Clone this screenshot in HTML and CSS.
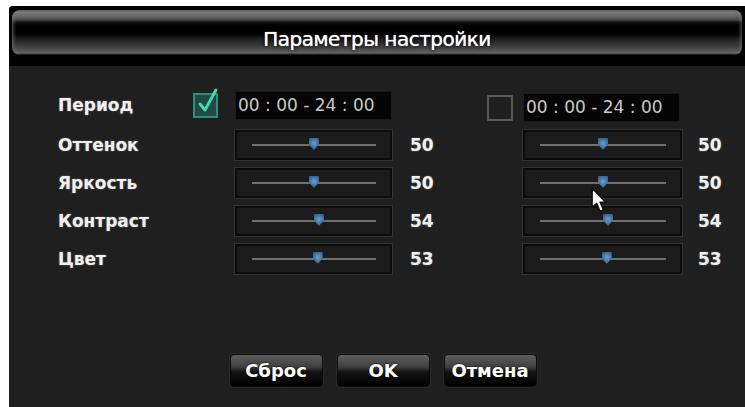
FILE: index.html
```html
<!DOCTYPE html>
<html lang="ru">
<head>
<meta charset="utf-8">
<title>Параметры настройки</title>
<link rel="stylesheet" href="styles.css">
</head>
<body>
<div class="panel">
  <div class="titlebar">
    <div class="gloss"><span class="title">Параметры настройки</span></div>
  </div>
  <div class="content">
    <div class="row period">
      <div class="label">Период</div>
      <div class="check on">
        <svg viewBox="0 0 26 30" width="26" height="30">
          <path d="M7 17 L12 23 L23 3" fill="none" stroke="#49d3b3" stroke-width="3" stroke-linejoin="round" stroke-linecap="round"/>
        </svg>
      </div>
      <div class="time">00 : 00 - 24 : 00</div>
      <div></div>
      <div class="check off lower"></div>
      <div class="time lower">00 : 00 - 24 : 00</div>
      <div></div>
    </div>

    <div class="row">
      <div class="label">Оттенок</div>
      <div></div>
      <div class="slider"><div class="track"><span class="thumb" style="left:50%"></span></div></div>
      <div class="value">50</div>
      <div></div>
      <div class="slider"><div class="track"><span class="thumb" style="left:50%"></span></div></div>
      <div class="value">50</div>
    </div>

    <div class="row">
      <div class="label">Яркость</div>
      <div></div>
      <div class="slider"><div class="track"><span class="thumb" style="left:50%"></span></div></div>
      <div class="value">50</div>
      <div></div>
      <div class="slider"><div class="track"><span class="thumb" style="left:50%"></span></div></div>
      <div class="value">50</div>
    </div>

    <div class="row">
      <div class="label">Контраст</div>
      <div></div>
      <div class="slider"><div class="track"><span class="thumb" style="left:54%"></span></div></div>
      <div class="value">54</div>
      <div></div>
      <div class="slider"><div class="track"><span class="thumb" style="left:54%"></span></div></div>
      <div class="value">54</div>
    </div>

    <div class="row">
      <div class="label">Цвет</div>
      <div></div>
      <div class="slider"><div class="track"><span class="thumb" style="left:53%"></span></div></div>
      <div class="value">53</div>
      <div></div>
      <div class="slider"><div class="track"><span class="thumb" style="left:53%"></span></div></div>
      <div class="value">53</div>
    </div>

    <div class="buttons">
      <button class="btn">Сброс</button>
      <button class="btn">OK</button>
      <button class="btn">Отмена</button>
    </div>
  </div>

  <svg class="cursor" viewBox="0 0 15 23" width="17" height="26">
    <path d="M1 1 L1 18 L5 14.5 L8 21.5 L11 20 L8 13.5 L13 13.5 Z" fill="#fff" stroke="#111" stroke-width="1.3" stroke-linejoin="round"/>
  </svg>
</div>
</body>
</html>
```

FILE: styles.css
```css
html, body {
  margin: 0;
  padding: 0;
  background: #fff;
}

body {
  font-family: "DejaVu Sans", "Liberation Sans", sans-serif;
  color: #fff;
}

.panel {
  position: relative;
  margin: 6px 0 0 9px;
  width: 736px;
  height: 401px;
  background: #1f1f1f;
  border-top-left-radius: 4px;
  overflow: hidden;
}

/* glossy window caption */
.titlebar {
  background: #000;
  padding: 4px 3px 11px 3px;
  height: 45px;
}

.gloss {
  height: 45px;
  border-radius: 8px;
  background: linear-gradient(to bottom,
    #5a5a5a 0px,
    #7a7a7a 2px,
    #6a6a6a 6px,
    #474747 10px,
    #151515 12px,
    #000 15px,
    #000 24px,
    #1a1a1a 28px,
    #383838 35px,
    #555 41px,
    #6a6a6a 43px,
    #2a2a2a 44px,
    #000 45px);
  box-shadow: inset 3px 0 3px -1px rgba(120,120,120,0.6), inset -3px 0 3px -1px rgba(120,120,120,0.5);
  text-align: center;
  box-sizing: border-box;
  padding-top: 16px;
}

.title {
  font-size: 20px;
  line-height: 26px;
  letter-spacing: -0.5px;
  color: #fff;
  text-shadow: 0 0 1px #fff, 0 0 3px #000, 0 0 4px #000;
}

.content {
  padding: 20px 0 0 49px;
}

.row {
  display: grid;
  grid-template-columns: 134px 43px 157px 95px 36px 159px auto;
  align-items: center;
  height: 38px;
}

.row.period {
  margin-bottom: 2px;
}

.label {
  font-size: 17px;
  font-weight: bold;
  color: #f0f0f0;
  text-shadow: 0 0 2px rgba(255,255,255,0.35);
}

.check {
  width: 25px;
  height: 25px;
  box-sizing: border-box;
  position: relative;
  margin-left: 1px;
}

.check.on {
  border: 2px solid #2f8f7c;
  background: #214a44;
}

.check.on svg {
  position: absolute;
  left: -2px;
  top: -8px;
}

.check.off {
  width: 26px;
  height: 26px;
  border: 2px solid #5a5a5a;
  margin-left: 0;
}

.lower {
  margin-top: 5px;
}

.time {
  height: 29px;
  width: 157px;
  box-sizing: border-box;
  background: #050505;
  border: 1px solid #1a1a1a;
  color: #c9c9c9;
  font-size: 17px;
  line-height: 27px;
  padding-left: 2px;
  white-space: nowrap;
}

.slider {
  height: 30px;
  box-sizing: border-box;
  border: 2px solid #0b0b0b;
  box-shadow: 0 0 0 1px #333;
  background: #1b1b1b;
  padding: 0 14px 0 15px;
  display: flex;
  align-items: center;
}

.track {
  position: relative;
  flex: 1;
  height: 2px;
  background: #6f6f6f;
}

.thumb {
  position: absolute;
  top: -6px;
  width: 10px;
  height: 12px;
  margin-left: -5px;
  background: radial-gradient(circle at 50% 45%, #6aa0d0 0, #3d6f9f 55%, #24486c 100%);
  clip-path: polygon(0 0, 100% 0, 100% 55%, 50% 100%, 0 55%);
  filter: blur(0.4px);
}

.value {
  padding-left: 18px;
  font-size: 17px;
  font-weight: bold;
  color: #f0f0f0;
  text-shadow: 0 0 2px rgba(255,255,255,0.3);
}

.row > .value:last-child {
  padding-left: 16px;
}

.buttons {
  display: flex;
  justify-content: center;
  gap: 14px;
  margin-top: 76px;
  margin-left: -49px;
  padding-left: 12px;
}

.btn {
  width: 93px;
  height: 33px;
  border: 1px solid #0a0a0a;
  border-radius: 4px;
  background: linear-gradient(to bottom, #5e5e5e 0, #404040 38%, #121212 55%, #000 100%);
  box-shadow: 0 0 0 1px #2a2a2a;
  color: #fff;
  font-family: "DejaVu Sans", "Liberation Sans", sans-serif;
  font-size: 18px;
  font-weight: bold;
  padding: 0;
  text-shadow: 0 0 2px #000;
}

.cursor {
  position: absolute;
  left: 582px;
  top: 181px;
}
```
